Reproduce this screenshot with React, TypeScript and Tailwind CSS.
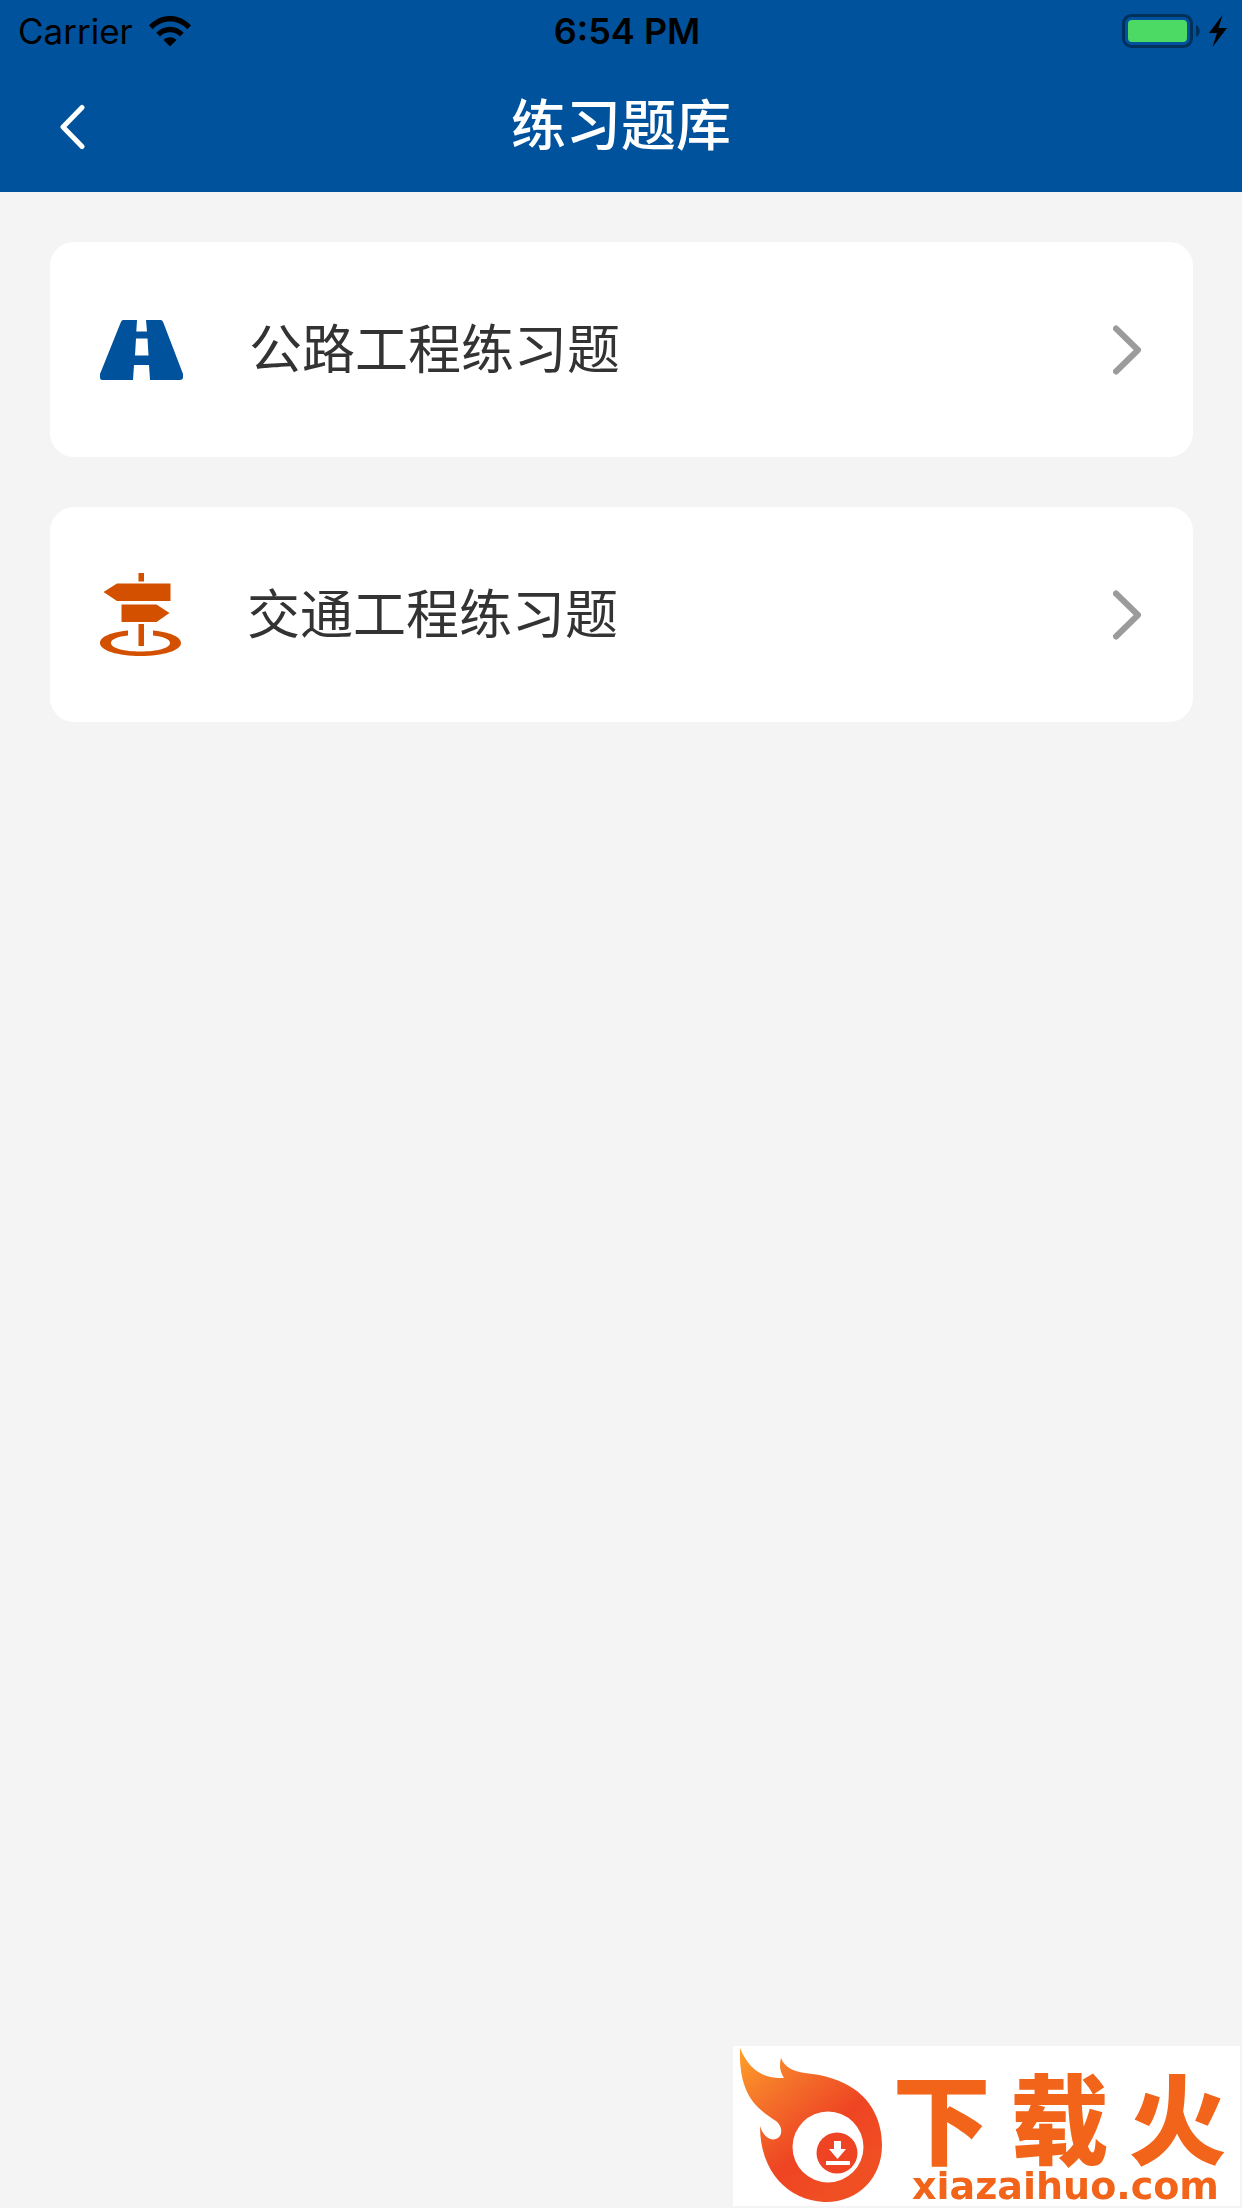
import type { ReactNode } from "react";

interface QuestionBank {
    id: string;
    title: string;
    icon: ReactNode;
}

function WifiIcon() {
    return (
        <svg viewBox="0 0 42 31" className="w-[42px] h-[31px]" fill="#000" aria-hidden="true">
            <path d="M0 9.5C12-3.2 30-3.2 42 9.5l-3.8 3.7C28.5 3 13.5 3 3.8 13.2Z" />
            <path d="M7.3 16.8c7.7-8 19.7-8 27.4 0L31 20.5c-5.7-5.6-14.3-5.6-20 0Z" />
            <path d="M14.5 24c3.6-3.6 9.4-3.6 13 0L21 30.5Z" />
        </svg>
    );
}

function BatteryIcon() {
    return (
        <svg viewBox="0 0 106 34" className="w-[106px] h-[34px]" aria-hidden="true">
            <rect x="1.5" y="1.5" width="68" height="31" rx="8" fill="none" stroke="#00315d" strokeWidth="3" />
            <rect x="6" y="6" width="59" height="22" rx="4" fill="#4cd964" />
            <path d="M74 11c5 2 5 10 0 12Z" fill="#00315d" />
            <path d="M100.5 1 87 19h8l-4.5 14L105 14h-8.5Z" fill="#000" />
        </svg>
    );
}

function RoadIcon() {
    return (
        <svg viewBox="0 0 83 60" className="w-[83px] h-[60px]" fill="#00529c" aria-hidden="true">
            <path
                fillRule="evenodd"
                d="M23 0H37L36.3 11.5H47L46 0H61Q62.5 0 63.5 3L83 54V58Q82.5 60 80 60H50L49 45H34L33 60H2Q0 60 0 57V54L20.5 3Q21.5 0 23 0ZM36 18.5 35 35.5H48.5L47.5 18.5Z"
            />
        </svg>
    );
}

function SignpostIcon() {
    return (
        <svg viewBox="0 0 81 83" className="w-[81px] h-[83px]" fill="#d35000" aria-hidden="true">
            <path d="M38.5 0H44V8.5H38.5ZM17 10.5H70.5V28H17L3.5 19ZM21.5 31.5H56.5L69.5 40 56.5 49H21.5ZM38.5 51H44V73H38.5Z" />
            <path d="M28 57.5C12 59 0 63.5 0 70 0 77.5 18 83 40.5 83S81 77.5 81 70C81 63.5 69 59 53 57.5V62.5C63 63.5 70 66 70 70 70 75 57 78.5 40.5 78.5S11 75 11 70C11 66 18 63.5 28 62.5Z" />
        </svg>
    );
}

function StatusBar() {
    return (
        <div className="grid grid-cols-[1fr_auto_1fr] items-center h-15 pt-0.5 pl-4.5 pr-3.5 text-black leading-none font-[Inter,sans-serif]">
            <div className="flex items-center gap-4 text-[35px]">
                <span>Carrier</span>
                <WifiIcon />
            </div>
            <time className="pl-2 text-[36px] font-semibold whitespace-nowrap">6:54 PM</time>
            <div className="flex justify-end">
                <BatteryIcon />
            </div>
        </div>
    );
}

function NavBar() {
    return (
        <div className="grid grid-cols-[100px_1fr_100px] items-center h-33 pt-0.5">
            <button type="button" aria-label="返回" className="flex justify-end pr-3.5">
                <svg viewBox="0 0 26 46" className="w-[26px] h-[46px]" fill="none" stroke="#fff" strokeWidth="5" strokeLinecap="round" strokeLinejoin="round">
                    <path d="M22 3.5 3 23 22 42.5" />
                </svg>
            </button>
            <h1 className="pb-3 text-center text-white text-[55px] leading-none font-medium">练习题库</h1>
        </div>
    );
}

function BankCard({ bank }: { bank: QuestionBank }) {
    return (
        <a href={`#${bank.id}`} className="flex items-center gap-[66px] h-[215px] px-[50px] rounded-3xl bg-white">
            {bank.icon}
            <span className="flex-1 pb-1.5 text-[53px] leading-none text-[#333333]">{bank.title}</span>
            <svg viewBox="0 0 30 50" className="w-[30px] h-[50px]" fill="none" stroke="#9b9b9b" strokeWidth="6" strokeLinecap="round" strokeLinejoin="round" aria-hidden="true">
                <path d="M3 3.5 25 25 3 46.5" />
            </svg>
        </a>
    );
}

function FlameLogo() {
    return (
        <svg viewBox="0 0 150 160" className="w-[150px] h-[160px] shrink-0" aria-hidden="true">
            <defs>
                <linearGradient id="flame" x1="0" y1="0" x2="0.7" y2="0.9">
                    <stop offset="0" stopColor="#ffa028" />
                    <stop offset="0.35" stopColor="#f4702a" />
                    <stop offset="0.7" stopColor="#ee4423" />
                    <stop offset="1" stopColor="#f04e23" />
                </linearGradient>
            </defs>
            <path
                fill="url(#flame)"
                d="M7 2C14 19 26 33 51 32C47 26 46 19 48 12C52 22 60 25 72 27C92 29 108 34 121 43C139 55 149 76 149 99C149 133 124 157 91 156C55 154 27 126 27 80C30 90 37 95 43 93C50 91 50 80 43 75C27 64 5 52 7 2Z"
            />
            <circle cx="95" cy="101" r="35.5" fill="#fff" />
            <circle cx="104" cy="107" r="20.5" fill="#ee4423" />
            <path fill="#fff" d="M101 95H108V103H113L104.5 113 96 103H101ZM93 115H117V119H93Z" />
        </svg>
    );
}

function SiteBadge() {
    return (
        <div className="fixed right-0.5 bottom-0.5 flex w-[507px] h-[160px] bg-white text-[#f26419]">
            <FlameLogo />
            <div className="flex flex-col items-center flex-1 gap-1 pt-5">
                <div className="flex gap-5 pr-1 text-[98px] leading-24 font-black">
                    <span>下</span>
                    <span>载</span>
                    <span>火</span>
                </div>
                <div className="pl-2 text-[38px] leading-10 font-bold font-['DejaVu_Sans',sans-serif]">xiazaihuo.com</div>
            </div>
        </div>
    );
}

const banks: QuestionBank[] = [
    { id: "highway", title: "公路工程练习题", icon: <RoadIcon /> },
    { id: "traffic", title: "交通工程练习题", icon: <SignpostIcon /> },
];

export default function App() {
    return (
        <div lang="zh-CN" className="min-h-screen w-full bg-[#f4f4f4] font-['Noto_Sans_CJK_SC',sans-serif]">
            <header className="bg-[#00529c]">
                <StatusBar />
                <NavBar />
            </header>
            <main className="flex flex-col gap-[50px] pl-[50px] pr-[49px] pt-[50px]">
                {banks.map((bank) => (
                    <BankCard key={bank.id} bank={bank} />
                ))}
            </main>
            <SiteBadge />
        </div>
    );
}
